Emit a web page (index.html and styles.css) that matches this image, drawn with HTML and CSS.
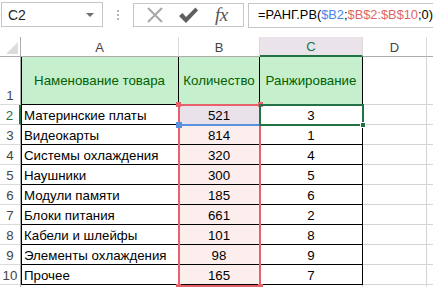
FILE: index.html
```html
<!DOCTYPE html>
<html lang="ru">
<head>
<meta charset="utf-8">
<link rel="stylesheet" href="styles.css">
</head>
<body>
<div class="toolbar">
  <div class="namebox"><span class="ref">C2</span><span class="caret"></span></div>
  <div class="dots"><i></i><i></i><i></i></div>
  <div class="btns">
    <svg class="ico" width="22" height="22" viewBox="0 0 22 22"><path d="M4 4 L18 18 M18 4 L4 18" stroke="#a8a8a8" stroke-width="2" fill="none"/></svg>
    <svg class="ico" width="22" height="22" viewBox="0 0 22 22"><path d="M2 12 L5.5 9 L9 13 L18.5 3.5 L21 6.5 L9 19 Z" fill="#5f5f5f"/></svg>
    <span class="fx">fx</span>
  </div>
  <div class="formula">=РАНГ.РВ(<span class="blue">$B2</span>;<span class="red">$B$2:$B$10</span>;0)</div>
</div>
<div class="sheet">
  <div class="grid">
    <div class="ch corner"><span class="tri"></span></div>
    <div class="ch">A</div>
    <div class="ch">B</div>
    <div class="ch sel">C</div>
    <div class="ch">D</div>
    <div class="ch last"></div>

    <div class="rh tall">1</div>
    <div class="c hd b">Наменование товара</div>
    <div class="c hd b">Количество</div>
    <div class="c hd b">Ранжирование</div>
    <div class="c"></div><div class="c last"></div>

    <div class="rh rsel">2</div>
    <div class="c b">Материнские платы</div>
    <div class="c b num p2">521</div>
    <div class="c b num">3</div>
    <div class="c"></div><div class="c last"></div>

    <div class="rh">3</div>
    <div class="c b">Видеокарты</div>
    <div class="c b num pk">814</div>
    <div class="c b num">1</div>
    <div class="c"></div><div class="c last"></div>

    <div class="rh">4</div>
    <div class="c b">Системы охлаждения</div>
    <div class="c b num pk">320</div>
    <div class="c b num">4</div>
    <div class="c"></div><div class="c last"></div>

    <div class="rh">5</div>
    <div class="c b">Наушники</div>
    <div class="c b num pk">300</div>
    <div class="c b num">5</div>
    <div class="c"></div><div class="c last"></div>

    <div class="rh">6</div>
    <div class="c b">Модули памяти</div>
    <div class="c b num pk">185</div>
    <div class="c b num">6</div>
    <div class="c"></div><div class="c last"></div>

    <div class="rh">7</div>
    <div class="c b">Блоки питания</div>
    <div class="c b num pk">661</div>
    <div class="c b num">2</div>
    <div class="c"></div><div class="c last"></div>

    <div class="rh">8</div>
    <div class="c b">Кабели и шлейфы</div>
    <div class="c b num pk">101</div>
    <div class="c b num">8</div>
    <div class="c"></div><div class="c last"></div>

    <div class="rh">9</div>
    <div class="c b">Элементы охлаждения</div>
    <div class="c b num pk">98</div>
    <div class="c b num">9</div>
    <div class="c"></div><div class="c last"></div>

    <div class="rh">10</div>
    <div class="c b">Прочее</div>
    <div class="c b num pk">165</div>
    <div class="c b num">7</div>
    <div class="c"></div><div class="c last"></div>

    <div class="rh stub"></div>
    <div class="c stub"></div><div class="c stub pk"></div><div class="c stub"></div><div class="c stub"></div><div class="c stub last"></div>
  </div>
  <div class="range-red"><i class="sq tl"></i><i class="sq tr"></i><i class="sq bl"></i><i class="sq br"></i></div>
  <div class="range-blue"><i class="sq bl"></i></div>
  <div class="selbox"><i class="handle"></i></div>
</div>
</body>
</html>
```

FILE: styles.css
```css
* { box-sizing: border-box; }
html, body { margin: 0; padding: 0; background: #fff; overflow: hidden; }
body {
  width: 433px; height: 287px;
  font-family: "Liberation Sans", Arial, sans-serif;
  color: #000;
}
.toolbar {
  height: 37px;
  display: flex;
  align-items: flex-start;
  padding-top: 2px;
}
.namebox {
  margin-left: 1px;
  width: 102px; height: 25px;
  border: 1px solid #c6c6c6;
  display: flex; align-items: center;
  padding-left: 6px;
  position: relative;
}
.ref { font-size: 14px; color: #1f1f1f; }
.caret {
  margin-left: auto; margin-right: 8px;
  width: 0; height: 0;
  border-left: 4px solid transparent; border-right: 4px solid transparent;
  border-top: 4px solid #6f6f6f;
}
.dots {
  width: 30px; height: 25px;
  display: flex; flex-direction: column; align-items: center; justify-content: center; gap: 2px;
}
.dots i { width: 2px; height: 2px; background: #b5b5b5; display: block; }
.btns {
  width: 111px; height: 24px;
  margin-top: 1px;
  border: 1px solid #c6c6c6;
  display: flex; align-items: center;
  padding-left: 10px; gap: 11px;
}
.ico { display: block; }
.fx {
  font-family: "Liberation Serif", "Times New Roman", serif;
  font-style: italic;
  font-size: 19px;
  color: #555;
  margin-left: 5px;
  letter-spacing: -0.5px;
}
.formula {
  margin-left: 4px;
  flex: 1;
  height: 25px;
  margin-top: 1px;
  border: 1px solid #c6c6c6;
  border-right: none;
  padding-left: 9px;
  font-size: 12.8px;
  line-height: 22px;
  white-space: nowrap;
  overflow: hidden;
}
.blue { color: #4a86e8; }
.red { color: #e06666; }

.sheet { position: relative; }
.grid {
  display: grid;
  grid-template-columns: 21px 158px 81px 103px 64px 1fr;
  grid-template-rows: 20px 48px repeat(9, 20px) 2px;
  font-size: 13.3px;
}
.ch {
  border-right: 1px solid #dadada;
  border-bottom: 1px solid #ababab;
  display: flex; align-items: center; justify-content: center;
  font-size: 13px; color: #444;
  padding-top: 1px;
}
.ch.sel {
  background: #ebe3ea;
  color: #217346;
  border-bottom: 2px solid #217346;
}
.corner { position: relative; border-right: 1px solid #ababab; }
.tri {
  position: absolute; right: 2px; bottom: 2px;
  width: 0; height: 0;
  border-left: 12px solid transparent;
  border-bottom: 12px solid #dcdcdc;
}
.rh {
  border-right: 1px solid #ababab;
  border-bottom: 1px solid #dadada;
  color: #444;
  font-size: 13.3px;
  display: flex; align-items: flex-end; justify-content: center;
  padding-bottom: 1px;
}
.rh.rsel { color: #217346; border-right: 2px solid #217346; }
.c {
  border-right: 1px solid #d4d4d4;
  border-bottom: 1px solid #d4d4d4;
  display: flex; align-items: flex-end;
  padding: 0 3px 1px;
  white-space: nowrap;
  overflow: hidden;
}
.stub { border-bottom: none; padding: 0; }
.last { border-right: none; }
.c.b { border-right-color: #000; border-bottom-color: #000; }
.grid > .c.b:nth-child(6n+2) { border-left: 1px solid #000; padding-left: 2px; }
.c.hd {
  background: #c6efce;
  color: #006100;
  align-items: center;
  justify-content: center;
  padding-bottom: 0;
}
.num { justify-content: center; }
.pk { background: #fdeeee; }
.p2 { background: #e9e2ea; }

.range-red {
  position: absolute;
  left: 178px; top: 67px;
  width: 83px; height: 183px;
  border: 2px solid #e8606a;
}
.range-blue {
  position: absolute;
  left: 178px; top: 87px;
  width: 82px; height: 2px;
  background: #5b8fe0;
}
.sq { position: absolute; width: 5px; height: 5px; background: #e8606a; display: block; }
.range-red .tl { left: -4px; top: -4px; }
.range-red .tr { right: -4px; top: -4px; }
.range-red .bl { left: -4px; bottom: -4px; }
.range-red .br { right: -4px; bottom: -4px; }
.range-blue .sq { background: #5b8fe0; left: -2px; top: -2px; width: 6px; height: 6px; }
.selbox {
  position: absolute;
  left: 259px; top: 67px;
  width: 105px; height: 22px;
  border: 2px solid #217346;
}
.handle {
  position: absolute; right: -4px; bottom: -4px;
  width: 6px; height: 6px;
  background: #217346;
  border: 1px solid #fff;
  display: block;
}
```
